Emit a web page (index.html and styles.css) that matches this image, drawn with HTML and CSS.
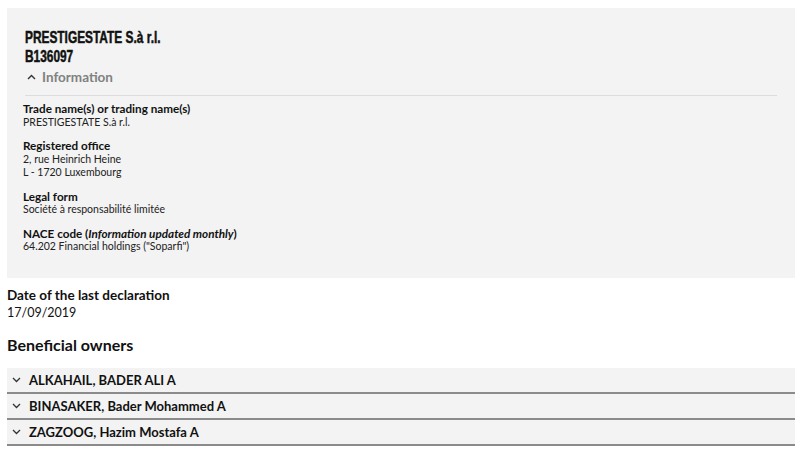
FILE: index.html
```html
<!DOCTYPE html>
<html>
<head>
    <meta charset="utf-8">
    <title>PRESTIGESTATE S.à r.l.</title>
    <link rel="stylesheet" href="styles.css">
</head>
<body>
<div class="page">
    <div class="company">
        <h1 class="company-name"><span>PRESTIGESTATE S.à r.l.<br>B136097</span></h1>
        <div class="toggle">
            <svg class="chev" width="9" height="6" viewBox="0 0 9 6"><path d="M1 5 L4.5 1.5 L8 5" fill="none" stroke="#333" stroke-width="1.4"/></svg>
            <span>Information</span>
        </div>
        <div class="info">
            <div class="field">
                <div class="label">Trade name(s) or trading name(s)</div>
                <div class="value">PRESTIGESTATE S.à r.l.</div>
            </div>
            <div class="field">
                <div class="label">Registered office</div>
                <div class="value">2, rue Heinrich Heine<br>L - 1720 Luxembourg</div>
            </div>
            <div class="field">
                <div class="label">Legal form</div>
                <div class="value">Société à responsabilité limitée</div>
            </div>
            <div class="field">
                <div class="label">NACE code (<em>Information updated monthly</em>)</div>
                <div class="value">64.202 Financial holdings ("Soparfi")</div>
            </div>
        </div>
    </div>

    <div class="declaration">
        <div class="decl-label">Date of the last declaration</div>
        <div class="decl-value">17/09/2019</div>
    </div>

    <h2 class="owners-title">Beneficial owners</h2>
    <div class="owners">
        <div class="owner">
            <svg class="chev" width="9" height="6" viewBox="0 0 9 6"><path d="M1 1 L4.5 4.5 L8 1" fill="none" stroke="#333" stroke-width="1.3"/></svg>
            <span>ALKAHAIL, BADER ALI A</span>
        </div>
        <div class="owner">
            <svg class="chev" width="9" height="6" viewBox="0 0 9 6"><path d="M1 1 L4.5 4.5 L8 1" fill="none" stroke="#333" stroke-width="1.3"/></svg>
            <span>BINASAKER, Bader Mohammed A</span>
        </div>
        <div class="owner">
            <svg class="chev" width="9" height="6" viewBox="0 0 9 6"><path d="M1 1 L4.5 4.5 L8 1" fill="none" stroke="#333" stroke-width="1.3"/></svg>
            <span>ZAGZOOG, Hazim Mostafa A</span>
        </div>
    </div>
</div>
</body>
</html>
```

FILE: styles.css
```css
*{
    margin: 0;
    padding: 0;
    box-sizing: border-box;
}
body{
    background: #fff;
    color: #111;
    font-family: Lato, "Open Sans", sans-serif;
}
.page{
    padding: 8px 5px 0 7px;
}
/* grey company block */
.company{
    background: #f2f3f2;
    padding: 20px 18px 20px 16px;
    height: 270px;
}
.company-name{
    height: 39px;
    padding-left: 2px;
}
/* no condensed face installed, so squeeze the heading */
.company-name span{
    display: inline-block;
    font-family: "Liberation Sans", Arial, sans-serif;
    font-weight: bold;
    font-size: 16.5px;
    line-height: 18.5px;
    color: #111;
    -webkit-text-stroke: 0.5px #111;
    transform: scaleX(0.72);
    transform-origin: left top;
    white-space: nowrap;
}
.toggle{
    display: flex;
    align-items: center;
    gap: 6px;
    margin-top: 2px;
    padding: 0 0 10px 2px;
    border-bottom: 1px solid #dcdddc;
    color: #808180;
    font-size: 13.5px;
    font-weight: bold;
    margin-left: 2px;
}
.info{
    padding-top: 6px;
}
.field{
    margin-bottom: 10px;
    line-height: 13.5px;
}
.label{
    font-weight: bold;
    font-size: 11.7px;
}
.value{
    color: #222;
    font-size: 10.5px;
}
.declaration{
    margin-top: 9px;
}
.decl-label{
    font-weight: bold;
    font-size: 13.5px;
    line-height: 16px;
}
.decl-value{
    font-size: 12.5px;
    line-height: 19px;
}
.owners-title{
    font-size: 16px;
    font-weight: bold;
    margin-top: 13px;
    line-height: 20px;
}
.owners{
    margin-top: 13px;
}
.owner{
    display: flex;
    align-items: center;
    gap: 8px;
    height: 26px;
    padding-left: 5px;
    background: #f2f3f2;
    border-bottom: 2px solid #8a8b8a;
    font-size: 13px;
    font-weight: bold;
}
```
